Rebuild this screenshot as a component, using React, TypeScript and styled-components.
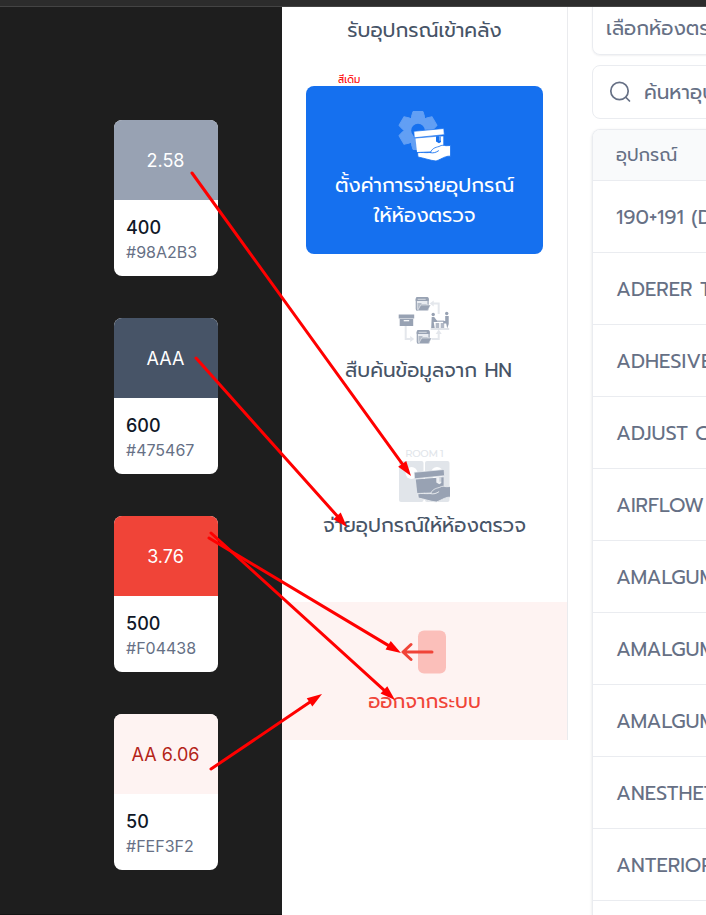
import React from "react";
import styled, { createGlobalStyle } from "styled-components";

const Global = createGlobalStyle`
  * { box-sizing: border-box; }
  body { margin: 0; background: #fff; overflow: hidden; }
`;

const thai = `Prompt, "Noto Sans Thai", "Noto Sans", "Open Sans", sans-serif`;

const Page = styled.div`
  position: relative;
  width: 706px;
  height: 915px;
  display: flex;
  flex-direction: column;
  overflow: hidden;
  font-family: ${thai};
`;
const TopBar = styled.div`
  flex: none;
  height: 7px;
  background: #2c2c2c;
  border-bottom: 1px solid #444;
`;
const Main = styled.div`
  flex: 1;
  min-height: 0;
  display: flex;
`;

const Canvas = styled.section`
  flex: none;
  width: 282px;
  padding: 113px 0 0 114px;
  display: flex;
  flex-direction: column;
  gap: 42px;
  background: #1e1e1e;
  border-bottom: 1px solid #141414;
`;
const Card = styled.article`
  width: 104px;
  height: 156px;
  flex: none;
  border-radius: 8px;
  overflow: hidden;
  background: #fff;
  font-family: Inter, sans-serif;
`;
const Swatch = styled.div<{ $bg: string; $fg: string }>`
  height: 80px;
  padding: 1px 1px 0 0;
  display: flex;
  align-items: center;
  justify-content: center;
  background: ${(p) => p.$bg};
  color: ${(p) => p.$fg};
  font-size: 18px;
`;
const CardBody = styled.div`
  padding: 14px 12px;
`;
const Step = styled.div`
  font-size: 18px;
  line-height: 27px;
  font-weight: 500;
  color: #101828;
`;
const Hex = styled.div`
  font-size: 16px;
  line-height: 22px;
  color: #667085;
`;

const Sidebar = styled.nav`
  flex: none;
  width: 286px;
  height: 733px;
  border-right: 1px solid #eaebee;
  display: flex;
  flex-direction: column;
  align-items: center;
  color: #475467;
`;
const Label = styled.div<{ $size?: number; $indent?: number }>`
  font-size: ${(p) => p.$size ?? 20}px;
  line-height: 30px;
  height: 30px;
  padding-left: ${(p) => p.$indent ?? 0}px;
  white-space: nowrap;
`;
const Note = styled.div`
  align-self: flex-start;
  margin: 27px 0 0 56px;
  height: 14px;
  font-size: 10px;
  line-height: 15px;
  color: #f00;
  white-space: nowrap;
`;
const ActiveItem = styled.div`
  width: 237px;
  height: 168px;
  flex: none;
  border-radius: 8px;
  background: #1570ef;
  color: #fff;
  display: flex;
  flex-direction: column;
  align-items: center;
  padding-top: 24px;
  svg { margin-bottom: 8px; }
`;
const Item = styled.div<{ $top: number; $gap: number }>`
  margin-top: ${(p) => p.$top}px;
  display: flex;
  flex-direction: column;
  align-items: center;
  gap: ${(p) => p.$gap}px;
`;
const Logout = styled.div`
  margin-top: auto;
  width: 100%;
  height: 138px;
  padding-top: 28px;
  background: #fef3f2;
  color: #f04438;
  display: flex;
  flex-direction: column;
  align-items: center;
  gap: 12px;
`;

const Content = styled.section`
  flex: 1;
  min-width: 0;
  padding-left: 24px;
  display: flex;
  flex-direction: column;
  overflow: hidden;
  color: #667085;
`;
const Field = styled.div<{ $first?: boolean }>`
  flex: none;
  width: 400px;
  height: ${(p) => (p.$first ? 48 : 54)}px;
  border: 1px solid #eaecf0;
  border-top-width: ${(p) => (p.$first ? 0 : 1)}px;
  border-radius: ${(p) => (p.$first ? "0 0 8px 8px" : "8px")};
  box-shadow: ${(p) => (p.$first ? "0 1px 2px rgba(16,24,40,.06)" : "none")};
  margin-bottom: 10px;
  padding: ${(p) => (p.$first ? "0 0 5px 13px" : "0 0 0 16px")};
  display: flex;
  align-items: center;
  gap: 11px;
`;
const Table = styled.div`
  width: 400px;
  flex: 1;
  border: 1px solid #eaecf0;
  border-bottom: 0;
  border-radius: 8px 8px 0 0;
  box-shadow: 0 1px 3px rgba(16, 24, 40, 0.12);
  overflow: hidden;
`;
const Head = styled.div`
  height: 51px;
  padding-left: 23px;
  display: flex;
  align-items: center;
  background: #f9fafb;
  border-bottom: 1px solid #eaecf0;
`;
const Row = styled.div`
  height: 72px;
  padding-left: 23px;
  display: flex;
  align-items: center;
  border-bottom: 1px solid #eaecf0;
  font-size: 20px;
  white-space: nowrap;
`;
const Arrows = styled.svg`
  position: absolute;
  left: 0;
  top: 0;
  pointer-events: none;
`;

const swatches = [
  { bg: "#98A2B3", fg: "#fff", ratio: "2.58", step: "400" },
  { bg: "#475467", fg: "#fff", ratio: "AAA", step: "600" },
  { bg: "#F04438", fg: "#fff", ratio: "3.76", step: "500" },
  { bg: "#FEF3F2", fg: "#B42318", ratio: "AA 6.06", step: "50" },
];
const rows = [
  "190+191 (DIA", "ADERER TIP", "ADHESIVE", "ADJUST CER", "AIRFLOW P", "AMALGUM",
  "AMALGUM", "AMALGUM", "ANESTHETIC", "ANTERIOR", "",
];
const lines = [
  [192, 173, 411, 476],
  [196, 358, 347, 527],
  [211, 533, 395, 700],
  [209, 538, 401, 653],
  [211, 769, 322, 694],
];

function HandBox({ fill, gap }: { fill: string; gap: string }) {
  return (
    <g fill={fill}>
      <path d="M17.5 28.5 45.3 26.3V38L34 41.500 19 42Z" />
      <path d="M15.800 21.300 45.800 18.500 46.300 24.700 16.300 27.800Z" stroke={gap} strokeWidth="0.7" />
      <path d="M38 26.200h5v5.800l-2 1.300-3-1.800Z" fill={gap} />
      <path d="M41 26.200h2.300v4.500H41Z" fill={fill} opacity=".35" />
      <path
        d="M19.500 42.800C23 42 27 43 32.500 42.500C34 38.500 37 37.500 41 36.500C44 34.500 46 35.500 48 35.700L52.500 35.500V46.200C47 45.800 45 48.500 38 51C32 50.500 26 48 20 47Z"
        stroke={gap}
        strokeWidth="0.8"
      />
      <path d="M32.500 42.700C35.500 43.300 38 42.500 40.500 40.800" fill="none" stroke={gap} strokeWidth="0.9" strokeLinecap="round" />
    </g>
  );
}

function SettingsIcon() {
  return (
    <svg width="53" height="52" viewBox="0 0 53 52">
      <g transform="translate(20 20.500)" fill="#629ff4">
        {[0, 60, 120].map((a) => (
          <path key={a} transform={`rotate(${a})`} d="M-6.500-14-5-19H5L6.500-14V14L5 19H-5L-6.500 14Z" strokeLinejoin="round" stroke="#629ff4" />
        ))}
        <circle r="14.500" />
        <circle r="6.800" fill="#1570ef" />
      </g>
      <HandBox fill="#fff" gap="#1570ef" />
    </svg>
  );
}

function Folder() {
  return (
    <g>
      <rect x=".6" y=".6" width="11.800" height="12.800" rx="1.500" fill="#e9ecf1" stroke="#98a2b3" strokeWidth="1.200" />
      <path d="M0 2Q0 0 2 0H11Q13 0 13 2V4H0Z" fill="#98a2b3" />
      <path d="M2 2.300h8" stroke="#e4e7ec" strokeWidth=".8" />
      <path d="M1.800 13V6h3.500l1 1H11v2H5.500L3 13Z" fill="#b5bdc9" />
      <path d="M5 8H15l-3 5.500H2Z" fill="#98a2b3" stroke="#fff" strokeWidth=".5" />
    </g>
  );
}

function SearchHnIcon() {
  return (
    <svg width="52" height="50" viewBox="0 0 52 50">
      <g transform="translate(.7 0)">
        <g fill="none" stroke="#e4e7ec" strokeWidth="2">
          <path d="M7 30v13h5M33 43h7v-6M40 18V7.500h-6" />
        </g>
        <g fill="#e4e7ec">
          <path d="m11.500 40 4 3-4 3ZM37 38l3-4.500 3 4.500ZM35 4.500l-4 3 4 3Z" />
        </g>
        <g transform="translate(17 1)"><Folder /></g>
        <g transform="translate(18 34)"><Folder /></g>
        <path d="M0 18.500h15.500v4H0ZM1 23.100h13.500V30H1Z" fill="#98a2b3" />
        <path d="M5 24.700h5.500" stroke="#fff" strokeWidth="1.200" />
        <g fill="#98a2b3">
          <circle cx="34.500" cy="18.500" r="1.700" />
          <circle cx="48" cy="17.500" r="1.700" />
          <path d="M33 21h2.500l3 4v1h-3.500l1 6h-3.500ZM46.500 20H50v8l-1.500 4.500-1-5h-3V25h2Z" />
          <path d="M35.500 24.500h10V26h-10ZM37 27h3.500v5H37ZM42 27h3.500v5H42Z" opacity=".75" />
          <path d="M32 32.500h18.500v1H32Z" opacity=".6" />
        </g>
      </g>
    </svg>
  );
}

function RoomIcon() {
  return (
    <svg width="52" height="55" viewBox="0 0 52 55">
      <text x="26.500" y="9" textAnchor="middle" textLength="38.500" fontFamily="Montserrat, Prompt, Inter, sans-serif" fontSize="10" fontWeight="500" fill="#e1e5ea">ROOM 1</text>
      <rect x="1" y="13" width="24.500" height="41" rx="2" fill="#e1e5ea" />
      <rect x="27" y="13" width="24.500" height="41" rx="2" fill="#e1e5ea" />
      <circle cx="13.500" cy="25" r="6" fill="#fff" />
      <circle cx="39" cy="25" r="6" fill="#fff" />
      <g transform="translate(0.300 3)"><HandBox fill="#98a2b3" gap="#eef0f3" /></g>
    </svg>
  );
}

function LogoutIcon() {
  return (
    <svg width="48" height="44" viewBox="0 0 48 44">
      <rect x="17" y="0.500" width="28" height="43" rx="6" fill="#fbbfba" />
      <path d="M31 22H2M10 14.500 2 22l8 7.500" fill="none" stroke="#f04438" strokeWidth="3" strokeLinecap="round" strokeLinejoin="round" />
    </svg>
  );
}

function ArrowLayer() {
  return (
    <Arrows width="706" height="915">
      {lines.map(([x1, y1, x2, y2], i) => {
        const a = (Math.atan2(y2 - y1, x2 - x1) * 180) / Math.PI;
        const len = Math.hypot(x2 - x1, y2 - y1);
        return (
          <g key={i} transform={`translate(${x1} ${y1}) rotate(${a})`} fill="#f00">
            <path d={`M0 0H${len - 10}`} stroke="#f00" strokeWidth="3" strokeLinecap="round" />
            <path d={`M${len} 0l-15-5v10Z`} />
          </g>
        );
      })}
    </Arrows>
  );
}

export default function App() {
  return (
    <Page>
      <Global />
      <TopBar />
      <Main>
        <Canvas>
          {swatches.map((s) => (
            <Card key={s.bg}>
              <Swatch $bg={s.bg} $fg={s.fg}>{s.ratio}</Swatch>
              <CardBody>
                <Step>{s.step}</Step>
                <Hex>{s.bg}</Hex>
              </CardBody>
            </Card>
          ))}
        </Canvas>
        <Sidebar>
          <Item $top={8} $gap={0}><Label>รับอุปกรณ์เข้าคลัง</Label></Item>
          <Note>สีเดิม</Note>
          <ActiveItem>
            <SettingsIcon />
            <Label>ตั้งค่าการจ่ายอุปกรณ์</Label>
            <Label>ให้ห้องตรวจ</Label>
          </ActiveItem>
          <Item $top={42} $gap={9}>
            <SearchHnIcon />
            <Label $indent={8}>สืบค้นข้อมูลจาก HN</Label>
          </Item>
          <Item $top={63} $gap={7}>
            <RoomIcon />
            <Label>จ่ายอุปกรณ์ให้ห้องตรวจ</Label>
          </Item>
          <Logout>
            <LogoutIcon />
            <Label>ออกจากระบบ</Label>
          </Logout>
        </Sidebar>
        <Content>
          <Field $first><Label>เลือกห้องตรวจ</Label></Field>
          <Field>
            <svg width="24" height="24" viewBox="0 0 24 24" fill="none" stroke="#667085" strokeWidth="1.700" strokeLinecap="round">
              <circle cx="10.500" cy="11" r="8.700" />
              <path d="m17 17.500 3.500 3.500" />
            </svg>
            <Label>ค้นหาอุปกรณ์</Label>
          </Field>
          <Table>
            <Head><Label $size={18}>อุปกรณ์</Label></Head>
            {rows.map((r, i) => <Row key={i}>{r}</Row>)}
          </Table>
        </Content>
      </Main>
      <ArrowLayer />
    </Page>
  );
}
